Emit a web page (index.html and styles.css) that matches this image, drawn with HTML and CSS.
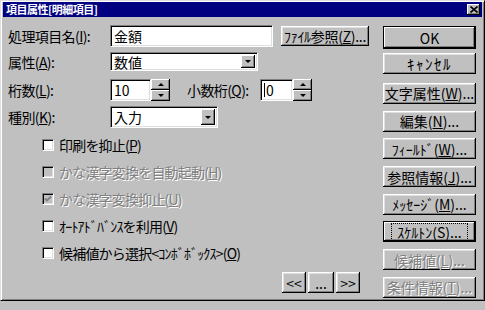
FILE: index.html
```html
<!DOCTYPE html>
<html lang="ja">
<head>
    <meta charset="UTF-8">
    <title>項目属性[明細項目]</title>
    <link rel="stylesheet" href="styles.css">
</head>
<body>
    <div class="dialog">
        <div class="titlebar">
            <span class="title">項目属性[明細項目]</span>
            <span class="close">
                <svg width="8" height="7" viewBox="0 0 8 7"><path d="M0.5 0.5 L7.5 6.5 M7.5 0.5 L0.5 6.5" stroke="#000" stroke-width="1.6"/></svg>
            </span>
        </div>
        <div class="content">
            <div class="main">
                <div class="row r1">
                    <span class="lbl">処理項目名(<u>I</u>):</span>
                    <div class="field name">金額</div>
                    <button class="btn file">ﾌｧｲﾙ参照(<u>Z</u>)...</button>
                </div>
                <div class="row r2">
                    <span class="lbl">属性(<u>A</u>):</span>
                    <div class="field select attr">数値<span class="drop"><i class="down"></i></span></div>
                </div>
                <div class="row r3">
                    <span class="lbl">桁数(<u>L</u>):</span>
                    <div class="field num">10</div>
                    <div class="spin"><span><i class="up"></i></span><span><i class="down"></i></span></div>
                    <span class="lbl small">小数桁(<u>Q</u>):</span>
                    <div class="field num2"><span class="caret"></span>0</div>
                    <div class="spin"><span><i class="up"></i></span><span><i class="down"></i></span></div>
                </div>
                <div class="row r4">
                    <span class="lbl">種別(<u>K</u>):</span>
                    <div class="field select kind">入力<span class="drop"><i class="down"></i></span></div>
                </div>
                <div class="checks">
                    <div class="check"><span class="box"></span>印刷を抑止(<u>P</u>)</div>
                    <div class="check off"><span class="box"></span>かな漢字変換を自動起動(<u>H</u>)</div>
                    <div class="check off"><span class="box">
                        <svg width="8" height="8" viewBox="0 0 8 8"><path d="M1 3.5 L3 5.5 L7 1.5" stroke="#808080" stroke-width="1.8" fill="none"/></svg>
                    </span>かな漢字変換抑止(<u>U</u>)</div>
                    <div class="check"><span class="box"></span>ｵｰﾄｱﾄﾞﾊﾞﾝｽを利用(<u>V</u>)</div>
                    <div class="check"><span class="box"></span>候補値から選択&lt;ｺﾝﾎﾞﾎﾞｯｸｽ&gt;(<u>O</u>)</div>
                </div>
                <div class="nav">
                    <button class="btn navbtn">&lt;&lt;</button>
                    <button class="btn navbtn mid">...</button>
                    <button class="btn navbtn">&gt;&gt;</button>
                </div>
            </div>
            <div class="side">
                <button class="btn wide default ok">OK</button>
                <button class="btn wide cancel">ｷｬﾝｾﾙ</button>
                <button class="btn wide first">文字属性(<u>W</u>)...</button>
                <button class="btn wide">編集(<u>N</u>)...</button>
                <button class="btn wide">ﾌｨｰﾙﾄﾞ(<u>W</u>)...</button>
                <button class="btn wide">参照情報(<u>J</u>)...</button>
                <button class="btn wide">ﾒｯｾｰｼﾞ(<u>M</u>)...</button>
                <button class="btn wide default focus"><span>ｽｹﾙﾄﾝ(S)...</span></button>
                <button class="btn wide off">候補値(<u>L</u>)...</button>
                <button class="btn wide off">条件情報(<u>T</u>)...</button>
            </div>
        </div>
    </div>
</body>
</html>
```
FILE: styles.css
```css
body {
    margin: 0;
    background: #c0c0c0;
    font-family: "Noto Sans CJK JP", "Noto Sans", sans-serif;
    font-size: 14px;
    color: #000;
}
.dialog {
    width: 485px;
    height: 301px;
    box-sizing: border-box;
    background: #c0c0c0;
    border: 1px solid;
    border-color: #dfdfdf #000 #000 #dfdfdf;
    box-shadow: inset 1px 1px #fff, inset -1px -1px #808080;
    padding: 1px 2px;
}
.titlebar {
    height: 15px;
    background: #000080;
    display: flex;
    align-items: center;
    justify-content: space-between;
    padding: 0 2px 0 3px;
}
.title {
    color: #fff;
    font-size: 11px;
    font-weight: bold;
    line-height: 1;
    letter-spacing: -0.5px;
}
.close {
    width: 13px;
    height: 11px;
    box-sizing: border-box;
    background: #c0c0c0;
    box-shadow: inset -1px -1px #000, inset 1px 1px #fff, inset -2px -2px #808080;
    display: flex;
    align-items: center;
    justify-content: center;
}
.content {
    display: flex;
}
.main {
    flex: 0 0 375px;
    padding: 8px 0 0 5px;
}
.row {
    display: flex;
    align-items: center;
    height: 22px;
}
.r2 { height: 19px; margin-top: 5px; }
.r3 { margin-top: 8px; }
.r4 { margin-top: 5px; }
.lbl {
    width: 102px;
    line-height: 1;
    white-space: nowrap;
    letter-spacing: -0.6px;
}
.lbl.small {
    width: 73px;
    margin-left: 17px;
}
.field {
    height: 100%;
    box-sizing: border-box;
    background: #fff;
    border: 1px solid;
    border-color: #808080 #fff #fff #808080;
    box-shadow: inset 1px 1px #000, inset -1px -1px #dfdfdf;
    padding-left: 3px;
    display: flex;
    align-items: center;
    line-height: 1;
    position: relative;
}
.name { width: 163px; }
.attr { width: 148px; }
.kind { width: 108px; }
.num { width: 41px; }
.num2 { width: 33px; }
.caret {
    width: 1px;
    height: 14px;
    background: #000;
    margin-right: 1px;
}
.drop {
    position: absolute;
    right: 2px;
    top: 2px;
    bottom: 2px;
    width: 14px;
    background: #c0c0c0;
    box-shadow: inset -1px -1px #000, inset 1px 1px #fff, inset -2px -2px #808080;
    display: flex;
    align-items: center;
    justify-content: center;
}
.down, .up {
    width: 0;
    height: 0;
    border-left: 3px solid transparent;
    border-right: 3px solid transparent;
}
.down { border-top: 3px solid #000; }
.up { border-bottom: 3px solid #000; }
.spin {
    width: 19px;
    height: 22px;
    display: flex;
    flex-direction: column;
}
.spin span {
    flex: 1;
    background: #c0c0c0;
    box-shadow: inset -1px -1px #000, inset 1px 1px #fff, inset -2px -2px #808080;
    display: flex;
    align-items: center;
    justify-content: center;
}
.checks {
    margin-top: 3px;
    padding-left: 34px;
}
.check {
    height: 27px;
    display: flex;
    align-items: center;
    line-height: 1;
    white-space: nowrap;
    letter-spacing: -0.8px;
}
.box {
    width: 12px;
    height: 12px;
    box-sizing: border-box;
    background: #fff;
    border: 1px solid;
    border-color: #808080 #fff #fff #808080;
    box-shadow: inset 1px 1px #000, inset -1px -1px #dfdfdf;
    margin-right: 5px;
    display: flex;
    align-items: center;
    justify-content: center;
}
.check.off {
    color: #808080;
    text-shadow: 1px 1px #fff;
}
.check.off .box {
    background: #c0c0c0;
}
.nav {
    display: flex;
    justify-content: flex-end;
    gap: 2px;
    margin: 6px 23px 0 0;
}
.btn {
    font-family: inherit;
    font-size: 14px;
    color: #000;
    background: #c0c0c0;
    border: 0;
    margin: 0;
    padding: 0;
    height: 21px;
    box-shadow: inset -1px -1px #000, inset 1px 1px #fff, inset -2px -2px #808080, inset 2px 2px #dfdfdf;
    line-height: 1;
    white-space: nowrap;
    display: flex;
    align-items: center;
    justify-content: center;
}
.file {
    width: 88px;
    height: 20px;
    margin-left: 8px;
    letter-spacing: -0.3px;
}
.navbtn {
    width: 24px;
    height: 21px;
}
.navbtn.mid { width: 26px; }
.side {
    flex: 0 0 93px;
    padding-top: 9px;
    display: flex;
    flex-direction: column;
    gap: 6.7px;
}
.wide { width: 93px; }
.default {
    border: 1px solid #000;
    box-shadow: inset -1px -1px #000, inset 1px 1px #fff, inset -2px -2px #808080;
}
.ok { height: 23px; }
.cancel {
    margin-top: -2.7px;
    font-size: 15px;
    letter-spacing: 1.5px;
}
.first { margin-top: 2.3px; }
.focus span {
    outline: 1px dotted #000;
    outline-offset: 1px;
    padding: 0 4px;
}
.btn.off {
    color: #808080;
    text-shadow: 1px 1px #fff;
}
```
